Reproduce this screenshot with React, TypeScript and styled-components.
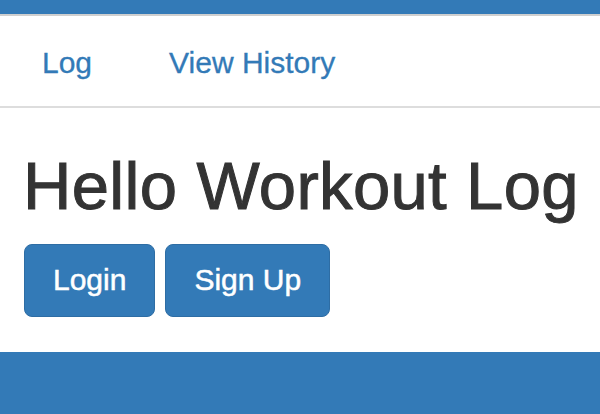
import React from "react";
import styled, { createGlobalStyle } from "styled-components";

const GlobalStyle = createGlobalStyle`
  html, body {
    margin: 0;
    padding: 0;
    background: #ffffff;
    font-family: "Liberation Sans", Arial, Helvetica, sans-serif;
  }
  * { box-sizing: border-box; }
`;

const Page = styled.div`
  min-height: 100vh;
  display: flex;
  flex-direction: column;
`;

const TopBar = styled.div`
  height: 16px;
  background: #337ab7;
  border-bottom: 2px solid #cfcfcf;
`;

const Nav = styled.nav`
  height: 92px;
  display: flex;
  align-items: center;
  gap: 77px;
  padding: 4px 0 0 42px;
  border-bottom: 2px solid #dddddd;
`;

const NavLink = styled.a`
  font-size: 30px;
  color: #337ab7;
  text-decoration: none;
  cursor: pointer;
  -webkit-text-stroke: 0.3px #337ab7;
`;

const Jumbotron = styled.section`
  padding: 41px 0 35px 24px;
`;

const Title = styled.h1`
  margin: 0 0 21px -1px;
  font-size: 67px;
  line-height: 1.1;
  font-weight: 400;
  letter-spacing: 0.35px;
  color: #333333;
  -webkit-text-stroke: 1px #333333;
`;

const ButtonRow = styled.div`
  display: flex;
  gap: 10px;
`;

const Button = styled.button`
  height: 73px;
  padding: 0 28px;
  display: flex;
  align-items: center;
  font-family: inherit;
  font-size: 30px;
  color: #ffffff;
  -webkit-text-stroke: 0.5px #ffffff;
  background: #337ab7;
  border: 1px solid #2e6da4;
  border-radius: 8px;
  cursor: pointer;
`;

const Footer = styled.footer`
  flex: 1;
  background: #337ab7;
`;

export default function App() {
  return (
    <Page>
      <GlobalStyle />
      <TopBar />
      <Nav>
        <NavLink>Log</NavLink>
        <NavLink>View History</NavLink>
      </Nav>
      <Jumbotron>
        <Title>Hello Workout Log</Title>
        <ButtonRow>
          <Button>Login</Button>
          <Button>Sign Up</Button>
        </ButtonRow>
      </Jumbotron>
      <Footer />
    </Page>
  );
}
